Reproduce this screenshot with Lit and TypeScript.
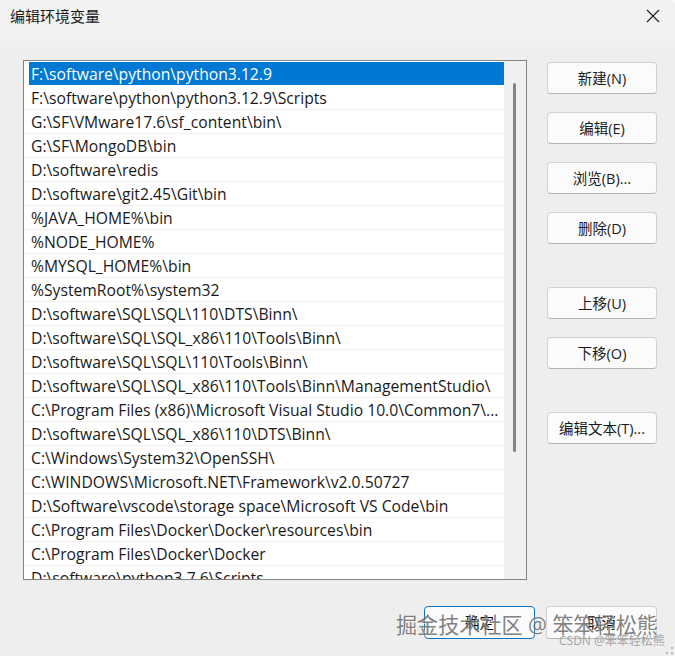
import { LitElement, css, html } from "lit";
import { customElement } from "lit/decorators.js";

const PATHS = [
  "F:\\software\\python\\python3.12.9",
  "F:\\software\\python\\python3.12.9\\Scripts",
  "G:\\SF\\VMware17.6\\sf_content\\bin\\",
  "G:\\SF\\MongoDB\\bin",
  "D:\\software\\redis",
  "D:\\software\\git2.45\\Git\\bin",
  "%JAVA_HOME%\\bin",
  "%NODE_HOME%",
  "%MYSQL_HOME%\\bin",
  "%SystemRoot%\\system32",
  "D:\\software\\SQL\\SQL\\110\\DTS\\Binn\\",
  "D:\\software\\SQL\\SQL_x86\\110\\Tools\\Binn\\",
  "D:\\software\\SQL\\SQL\\110\\Tools\\Binn\\",
  "D:\\software\\SQL\\SQL_x86\\110\\Tools\\Binn\\ManagementStudio\\",
  "C:\\Program Files (x86)\\Microsoft Visual Studio 10.0\\Common7\\...",
  "D:\\software\\SQL\\SQL_x86\\110\\DTS\\Binn\\",
  "C:\\Windows\\System32\\OpenSSH\\",
  "C:\\WINDOWS\\Microsoft.NET\\Framework\\v2.0.50727",
  "D:\\Software\\vscode\\storage space\\Microsoft VS Code\\bin",
  "C:\\Program Files\\Docker\\Docker\\resources\\bin",
  "C:\\Program Files\\Docker\\Docker",
  "D:\\software\\python3.7.6\\Scripts",
];

const SIDE_BUTTONS = [
  { label: "新建(N)", cls: "" },
  { label: "编辑(E)", cls: "" },
  { label: "浏览(B)...", cls: "" },
  { label: "删除(D)", cls: "" },
  { label: "上移(U)", cls: "gap-lg" },
  { label: "下移(O)", cls: "" },
  { label: "编辑文本(T)...", cls: "gap-xl" },
];

@customElement("app-root")
export class AppRoot extends LitElement {
  static styles = css`
    :host {
      display: block;
      position: relative;
      width: 675px;
      height: 656px;
      overflow: hidden;
      border-top-right-radius: 6px;
      background: #eeeeee;
      color: #1a1a1a;
      font-family: "Open Sans", "Noto Sans CJK SC", sans-serif;
      font-size: 15.7px;
    }
    .titlebar {
      display: flex;
      align-items: center;
      justify-content: space-between;
      height: 31px;
      padding: 0 15px 1px 10px;
      background: #f2f2f2;
      font-size: 15px;
    }
    .close {
      display: block;
      width: 14px;
      height: 14px;
    }
    .close path {
      stroke: #1c1c1c;
      stroke-width: 1.1;
      fill: none;
    }
    .body {
      display: flex;
      padding: 28px 18px 0 23px;
      background: linear-gradient(#f2f2f2, #eeeeee 24px);
    }
    .list {
      display: flex;
      width: 504px;
      height: 520px;
      box-sizing: border-box;
      border: 1px solid #838383;
      background: #f0f0f0;
      overflow: hidden;
    }
    .rows {
      width: 480px;
      flex: none;
      padding-top: 1px;
      background: #fff;
    }
    .row {
      height: 23px;
      padding-left: 5px;
      border-bottom: 1px solid #efefef;
      white-space: nowrap;
    }
    .row span {
      display: block;
      height: 23px;
      padding-left: 2px;
      line-height: 25px;
      overflow: hidden;
    }
    .row.selected {
      border-bottom-color: #fff;
    }
    .row.selected span {
      background: #0078d4;
      color: #fff;
    }
    .gutter {
      flex: 1;
      padding: 22px 0 0 9px;
    }
    .thumb {
      width: 3px;
      height: 369px;
      border-radius: 2px;
      background: #858585;
    }
    .side {
      display: flex;
      flex-direction: column;
      gap: 18px;
      margin-left: 20px;
      padding-top: 2px;
    }
    button {
      display: block;
      width: 110px;
      height: 32px;
      padding: 0 0 2px;
      box-sizing: border-box;
      border: 1px solid #d2d2d2;
      border-bottom-color: #b4b4b4;
      border-radius: 4px;
      background: #fbfbfb;
      color: #1a1a1a;
      font: inherit;
      font-size: 14.5px;
    }
    .gap-lg {
      margin-top: 25px;
    }
    .gap-xl {
      margin-top: 25px;
    }
    .footer {
      display: flex;
      justify-content: flex-end;
      gap: 11px;
      padding: 26px 18px 0 0;
    }
    .footer button {
      width: 111px;
      height: 33px;
      color: #000;
    }
    .footer .primary {
      border: 1.5px solid #0a74c4;
    }
    .mark {
      position: absolute;
      left: 396px;
      top: 610px;
      color: #5f5f5f;
      font-size: 21.1px;
      line-height: 30px;
      white-space: nowrap;
      opacity: 0.78;
      text-shadow: 0 0 1px #fff, 1px 1px 0 rgba(255, 255, 255, 0.7);
    }
    .csdn {
      position: absolute;
      left: 559px;
      top: 633px;
      color: #a3a3a3;
      font-size: 12px;
      line-height: 16px;
      white-space: nowrap;
    }
    .grip {
      position: absolute;
      right: 2px;
      bottom: 2px;
      width: 7px;
      height: 7px;
    }
    .grip rect {
      fill: #b5b5b5;
    }
  `;

  render() {
    return html`
      <div class="titlebar">
        <span>编辑环境变量</span>
        <svg class="close" viewBox="0 0 14 14"><path d="M1 1L13 13M13 1L1 13" /></svg>
      </div>
      <div class="body">
        <div class="list">
          <div class="rows">
            ${PATHS.map(
              (p, i) => html`<div class="row ${i === 0 ? "selected" : ""}"><span>${p}</span></div>`
            )}
          </div>
          <div class="gutter"><div class="thumb"></div></div>
        </div>
        <div class="side">
          ${SIDE_BUTTONS.map((b) => html`<button class=${b.cls}>${b.label}</button>`)}
        </div>
      </div>
      <div class="footer">
        <button class="primary">确定</button>
        <button>取消</button>
      </div>
      <div class="mark">掘金技术社区 @ 笨笨轻松熊</div>
      <div class="csdn">CSDN @笨笨轻松熊</div>
      <svg class="grip" viewBox="0 0 7 7">
        <rect x="5" y="0" width="2" height="2" />
        <rect x="0" y="5" width="2" height="2" />
        <rect x="5" y="5" width="2" height="2" />
      </svg>
    `;
  }
}
